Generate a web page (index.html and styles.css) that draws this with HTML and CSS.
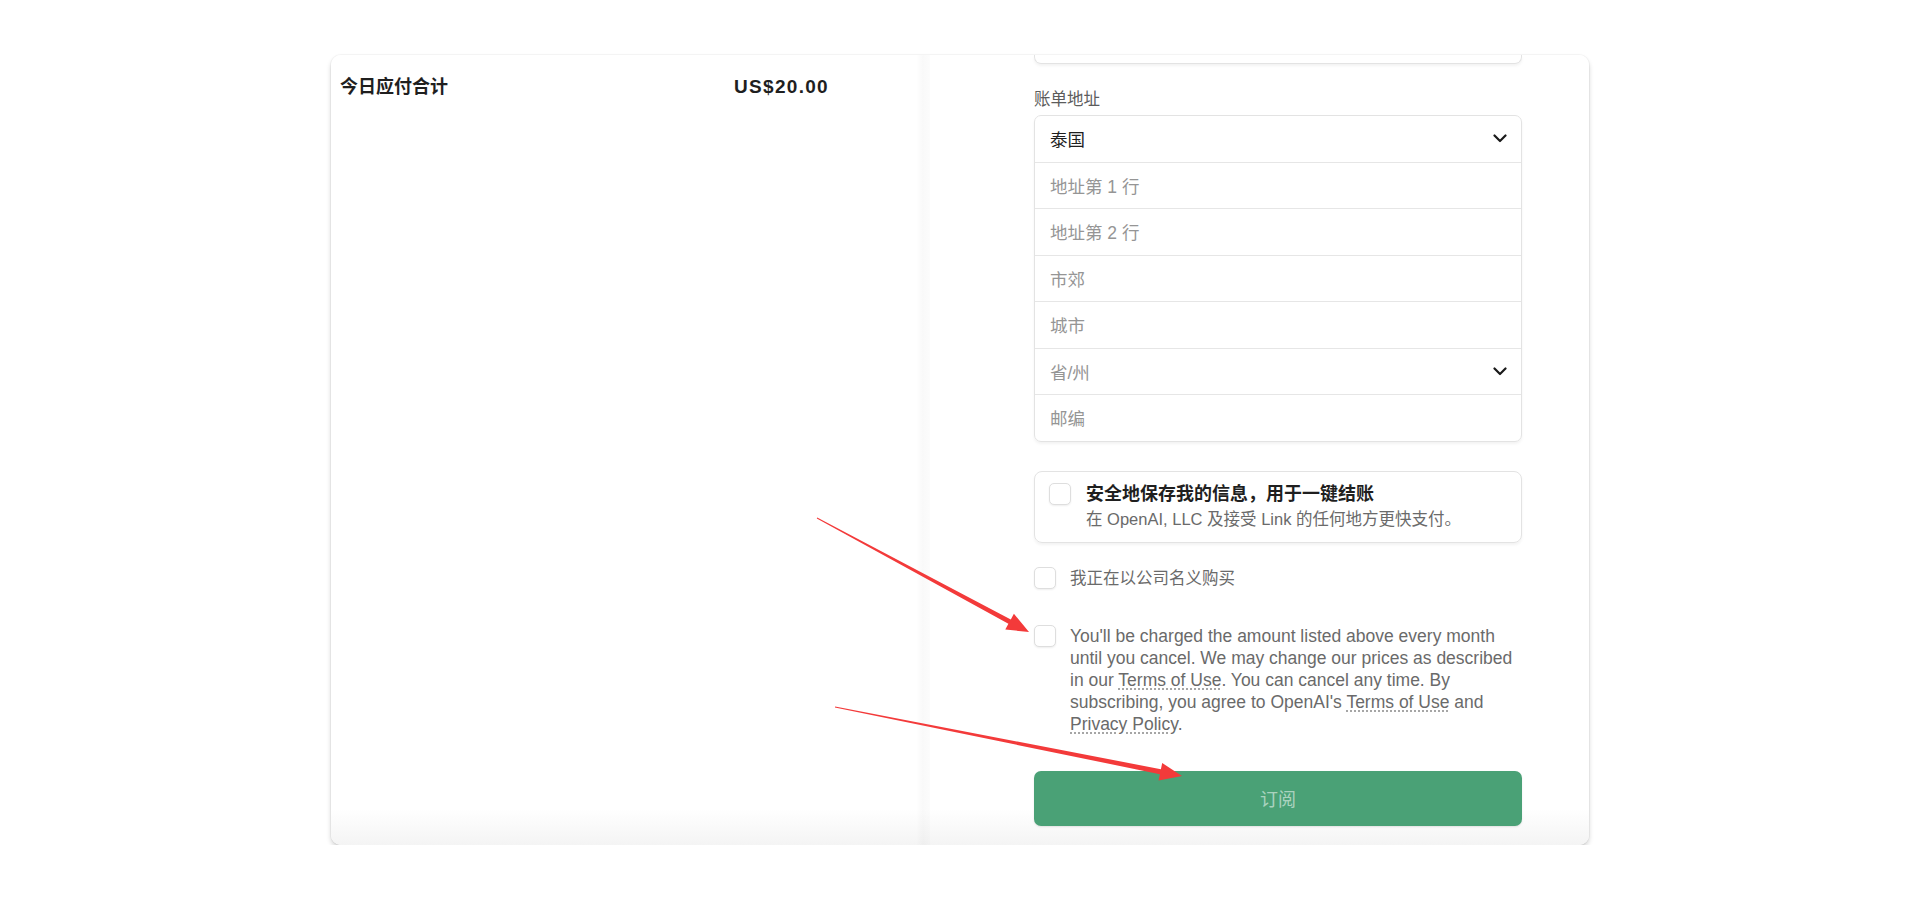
FILE: index.html
```html
<!DOCTYPE html>
<html>
<head>
    <meta charset="utf-8">
    <title>订阅 - 结账</title>
    <link rel="stylesheet" href="styles.css">
</head>
<body>

    <div class="card">

        <section class="summary">
            <div class="total-row">
                <span>今日应付合计</span>
                <span class="amount">US$20.00</span>
            </div>
        </section>

        <div class="column-shade"></div>

        <section class="checkout">

            <div class="field-stub"></div>

            <div class="field-label">账单地址</div>

            <div class="address-group">
                <div class="addr-row">
                    <span class="value">泰国</span>
                    <svg class="chevron" width="14" height="9" viewBox="0 0 14 9"><polyline points="1.5,1.5 7,7 12.5,1.5" fill="none" stroke="#1a1a1a" stroke-width="2.2" stroke-linecap="round" stroke-linejoin="round"/></svg>
                </div>
                <div class="addr-row"><span class="placeholder">地址第 1 行</span></div>
                <div class="addr-row"><span class="placeholder">地址第 2 行</span></div>
                <div class="addr-row"><span class="placeholder">市郊</span></div>
                <div class="addr-row"><span class="placeholder">城市</span></div>
                <div class="addr-row">
                    <span class="placeholder">省/州</span>
                    <svg class="chevron" width="14" height="9" viewBox="0 0 14 9"><polyline points="1.5,1.5 7,7 12.5,1.5" fill="none" stroke="#1a1a1a" stroke-width="2.2" stroke-linecap="round" stroke-linejoin="round"/></svg>
                </div>
                <div class="addr-row"><span class="placeholder">邮编</span></div>
            </div>

            <div class="link-box">
                <span class="checkbox link-check"></span>
                <div class="link-text">
                    <div class="link-title">安全地保存我的信息，用于一键结账</div>
                    <div class="link-sub">在 OpenAI, LLC 及接受 Link 的任何地方更快支付。</div>
                </div>
            </div>

            <div class="check-row company">
                <span class="checkbox"></span>
                <span class="check-label">我正在以公司名义购买</span>
            </div>

            <div class="check-row terms">
                <span class="checkbox"></span>
                <p class="terms-text">You'll be charged the amount listed above every month until you cancel. We may change our prices as described in our <a class="dotted">Terms of Use</a>. You can cancel any time. By subscribing, you agree to OpenAI's <a class="dotted">Terms of Use</a> and <a class="dotted">Privacy Policy</a>.</p>
            </div>

            <button type="button" class="subscribe-btn">订阅</button>

        </section>

    </div>

    <!-- red markup arrows drawn over the screenshot -->
    <svg class="annotations" width="1920" height="900" viewBox="0 0 1920 900">
        <polygon fill="#f33a3a" points="817.2,517.6 1010.8,619.4 1013.9,613.7 1029,632 1005.3,629.5 1008.4,623.8 816.8,518.4"/>
        <polygon fill="#f33a3a" points="835.1,706.5 1160.9,769.2 1162.2,762.9 1182,776 1158.6,780.5 1159.9,774.2 834.9,707.5"/>
    </svg>

</body>
</html>
```

FILE: styles.css
```css
body {
    margin: 0;
    background: #ffffff;
    font-family: "Liberation Sans", "Noto Sans CJK SC", sans-serif;
    color: #1a1a1a;
}

.card {
    width: 1258px;
    height: 790px;
    margin: 55px auto 0;
    display: flex;
    border-radius: 10px;
    overflow: hidden;
    background: linear-gradient(#ffffff calc(100% - 36px), #f4f4f4);
    box-shadow: 0 0 0 1px rgba(0, 0, 0, 0.03), 0 3px 5px rgba(0, 0, 0, 0.18);
}

.summary {
    width: 585px;
    padding: 20px 87px 0 9px;
    box-sizing: border-box;
}

.total-row {
    display: flex;
    justify-content: space-between;
    font-size: 18px;
    line-height: 24px;
    font-weight: 600;
    color: #1f1f1f;
}

.amount {
    font-size: 19px;
    letter-spacing: 1.3px;
}

.column-shade {
    width: 14px;
    background: linear-gradient(to right, rgba(0, 0, 0, 0), rgba(0, 0, 0, 0.025) 50%, rgba(0, 0, 0, 0.01));
}

.checkout {
    flex: 1;
    padding: 0 67px 0 104px;
    display: flex;
    flex-direction: column;
}

.field-stub {
    height: 8px;
    border: 1px solid #e3e3e3;
    border-top: none;
    border-radius: 0 0 7px 7px;
    box-shadow: 0 2px 3px rgba(0, 0, 0, 0.05);
}

.field-label {
    margin-top: 23px;
    font-size: 16.5px;
    line-height: 24px;
    color: #5c5c5c;
}

.address-group {
    margin-top: 4px;
    border: 1px solid #e3e3e3;
    border-radius: 7px;
    box-shadow: 0 2px 3px rgba(0, 0, 0, 0.05);
}

.addr-row {
    height: 46.5px;
    box-sizing: border-box;
    display: flex;
    align-items: center;
    justify-content: space-between;
    padding: 0 15px;
    font-size: 17.5px;
    border-top: 1px solid #e6e6e6;
}

.addr-row:first-child {
    height: 45.5px;
    border-top: none;
}

.value {
    color: #1f1f1f;
}

.placeholder {
    color: #959595;
}

.chevron {
    margin-right: -1px;
}

.link-box {
    margin-top: 29px;
    height: 72px;
    box-sizing: border-box;
    display: flex;
    padding: 10px 14px;
    border: 1px solid #e3e3e3;
    border-radius: 8px;
    box-shadow: 0 2px 3px rgba(0, 0, 0, 0.05);
}

.checkbox {
    flex: none;
    width: 22px;
    height: 22px;
    box-sizing: border-box;
    border: 1px solid #dedede;
    border-radius: 5px;
    background: #ffffff;
    box-shadow: 0 1px 2px rgba(0, 0, 0, 0.07);
}

.link-check {
    margin-top: 1px;
}

.link-text {
    margin-left: 15px;
}

.link-title {
    font-size: 18px;
    line-height: 25px;
    font-weight: 600;
    color: #1f1f1f;
}

.link-sub {
    font-size: 16.5px;
    line-height: 25px;
    color: #6a6a6a;
}

.check-row {
    display: flex;
    align-items: flex-start;
}

.company {
    margin-top: 24px;
}

.check-label {
    margin-left: 14px;
    font-size: 16.5px;
    line-height: 22px;
    color: #6a6a6a;
}

.terms {
    margin-top: 36px;
}

.terms-text {
    margin: 0 0 0 14px;
    font-size: 17.5px;
    line-height: 22px;
    color: #6a6a6a;
}

.dotted {
    color: #6a6a6a;
    text-decoration: underline dotted #9a9a9a;
    text-underline-offset: 3px;
}

.subscribe-btn {
    margin-top: 36px;
    height: 55px;
    border: none;
    border-radius: 7px;
    background: #4aa176;
    color: rgba(255, 255, 255, 0.55);
    font-family: "Liberation Sans", "Noto Sans CJK SC", sans-serif;
    font-size: 18px;
    box-shadow: 0 1px 2px rgba(0, 0, 0, 0.1);
}

.annotations {
    position: absolute;
    top: 0;
    left: 0;
    pointer-events: none;
}
```
